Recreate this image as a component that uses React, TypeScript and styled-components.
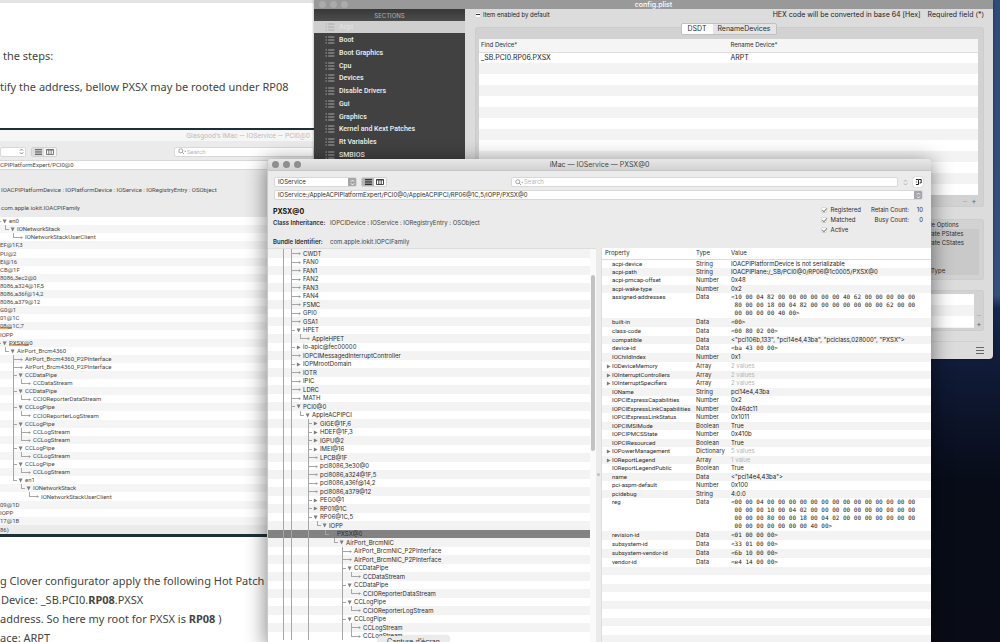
import React from "react";
import styled, { createGlobalStyle, css } from "styled-components";

const GlobalStyle = createGlobalStyle`
  * { box-sizing: border-box; }
  body { margin: 0; font-family: Inter, "Liberation Sans", sans-serif; font-size: 6px; line-height: 8px; color: #2c2c2c; }
  ul, p, h1, h2, dl, dd { margin: 0; padding: 0; }
  ul { list-style: none; }
  button, input, select { font: inherit; color: inherit; margin: 0; padding: 0; border: 0; }
`;

const Desktop = styled.main`
  position: relative;
  height: 100vh;
  overflow: hidden;
  background: linear-gradient(#2f4b78 0, #34507c 46%, #16264c 48%, #101a36 58%, #080c18 75%, #090c16 100%);
`;

/* ---------- forum post ---------- */

const Post = styled.article`
  position: absolute;
  left: 0;
  top: 0;
  bottom: 0;
  width: 314px;
  overflow: hidden;
  display: flex;
  flex-direction: column;
  background: #fff;
  border-top: 3px solid #e4e4e4;
  color: #444;
  font-family: "Noto Sans", "DejaVu Sans", sans-serif;
  font-size: 11px;
  line-height: 19px;
  white-space: nowrap;
`;

const CutLine = styled.p`
  display: flex;
  justify-content: space-between;
  align-items: flex-end;
  height: 3px;
  padding: 0 20px 0 12px;
  overflow: hidden;
  line-height: 8px;
`;

const Steps = styled.div`
  display: flex;
  flex-direction: column;
  gap: 12px;
  padding-top: 43px;
  height: 122px;
  margin-bottom: 3px;
  flex: none;
`;

const Line = styled.p<{ $indent?: number }>`
  padding-left: ${(p) => p.$indent ?? 0}px;
`;

const Patch = styled.div`
  padding-top: 34px;
`;

const Shot = styled.section`
  flex: none;
  display: flex;
  flex-direction: column;
  border: solid #1c3036;
  border-width: 2px 0 3px;
  background: #ebebeb;
  color: #4a4a4a;
  font-family: Roboto, "Liberation Sans", sans-serif;
  font-size: 6px;
  line-height: 8px;
`;

const ShotTitle = styled.h2`
  height: 11px;
  padding-right: 4px;
  background: #f6f6f6;
  color: #bdbdbd;
  font-size: 7px;
  line-height: 12px;
  font-weight: 400;
  text-align: right;
`;

const ShotBar = styled.div`
  display: flex;
  align-items: center;
  height: 19px;
  padding-top: 2px;
`;

const ShotPath = styled.p`
  height: 10px;
  background: #fff;
  border: solid #d8d8d8;
  border-width: 1px 0;
`;

const ShotText = styled.p`
  height: 18px;
  padding-left: 1px;
  line-height: 18px;

  ${ShotPath} + & { margin-top: 11px; }
`;

const ShotFoot = styled.p`
  height: 9px;
  line-height: 9px;
`;

/* ---------- shared controls ---------- */

const Field = styled.label`
  display: flex;
  align-items: center;
  flex: 1;
  height: 10px;
  padding-left: 3px;
  background: #fff;
  border: 1px solid #d8d8d8;
  border-radius: 2px;
  overflow: hidden;

  input {
    flex: 1;
    min-width: 0;
    height: 8px;
    background: none;
    outline: 0;
  }
  input::placeholder { color: #b8b8b8; }
`;

const PickerBox = styled.span<{ $width: number }>`
  display: flex;
  width: ${(p) => p.$width}px;
  height: 10px;
  background: #fff;
  border: 1px solid #d8d8d8;
  border-radius: 2px;
  overflow: hidden;

  select {
    flex: 1;
    min-width: 0;
    height: 8px;
    padding-left: 3px;
    appearance: none;
    background: none;
    outline: 0;
  }
`;

const StepperCap = styled.span<{ $plain?: boolean }>`
  display: grid;
  place-items: center;
  width: 8px;
  height: 8px;
  background: ${(p) => (p.$plain ? "#fff" : "#a6a6aa")};
  color: ${(p) => (p.$plain ? "#777" : "#fff")};
`;

const FaintStepper = styled.span`
  display: grid;
  color: #a8a8a8;
`;

const Segments = styled.div<{ $faded?: boolean }>`
  display: flex;
  height: 10px;
  border: 1px solid #d0d0d0;
  border-radius: 2px;
  background: #fff;
  overflow: hidden;
  color: ${(p) => (p.$faded ? "#6c6c6c" : "#333")};

  button { background: ${(p) => (p.$faded ? "#f6f6f6" : "#fafafa")}; }
  button[aria-pressed="true"] { background: ${(p) => (p.$faded ? "#dedede" : "#b4b4b4")}; }
`;

const Segment = styled.button`
  display: grid;
  place-items: center;
  width: 12px;
`;

const Chevrons = () => (
  <svg width="5" height="7" viewBox="0 0 5 7" fill="none" stroke="currentColor" strokeWidth="0.9">
    <path d="M1 2.6 2.5 1 4 2.6M1 4.4 2.5 6 4 4.4" />
  </svg>
);
const ListIcon = () => (
  <svg width="7" height="6" viewBox="0 0 7 6" stroke="currentColor" strokeWidth="1">
    <path d="M0 .5h7M0 2.2h7M0 3.9h7M0 5.5h7" />
  </svg>
);
const ColumnsIcon = () => (
  <svg width="8" height="6" viewBox="0 0 8 6" fill="none" stroke="currentColor" strokeWidth="0.9">
    <path d="M.5.5h7v5h-7zM2.8.5v5M5.2.5v5M.5 1h7" />
  </svg>
);
const SearchIcon = () => (
  <svg width="9" height="7" viewBox="0 0 9 7" fill="none" stroke="#8a8a8a" strokeWidth="0.8">
    <circle cx="2.8" cy="2.8" r="2" />
    <path d="M4.3 4.3 6 6M6.3 2.8l.9.9.9-.9" />
  </svg>
);
const PaneIcon = () => (
  <svg width="7" height="8" viewBox="0 0 7 8" fill="none" stroke="#222" strokeWidth="1">
    <path d="M1 1.5h2.5v5H1M4 1.5h2.2v3.4H4.6" />
    <path d="M.8 4h1.4" strokeWidth="0.7" />
  </svg>
);

const CheckLabel = styled.label`
  display: flex;
  align-items: center;
  gap: 4px;
`;

const Check = styled.input.attrs({ type: "checkbox" })`
  position: relative;
  appearance: none;
  width: 6px;
  height: 6px;
  background: #fbfbfb;
  border: 1px solid #dadada;
  border-radius: 1px;

  &:checked::after {
    content: "";
    position: absolute;
    left: 1px;
    top: -1px;
    width: 2px;
    height: 4px;
    border: solid #8e8e8e;
    border-width: 0 1px 1px 0;
    transform: rotate(40deg);
  }
  &:indeterminate::after {
    content: "";
    position: absolute;
    inset: 1px 0 auto;
    height: 1px;
    background: #333;
  }
`;

const Lights = styled.span<{ $color: string }>`
  display: flex;
  gap: 4px;

  i {
    width: 7px;
    height: 7px;
    border-radius: 50%;
    background: ${(p) => p.$color};
  }
`;

/* ---------- registry tree ---------- */

type Marker = "-" | "v" | ">" | "";
interface TreeNode {
  /* one character per ancestor level: "|" draws its line, "." leaves it blank */
  guides: string;
  /* T joins a line that goes on, L ends it */
  joint: "T" | "L" | "";
  marker: Marker;
  label: string;
  state?: "selected" | "marked";
}

const parse = (source: string): TreeNode[] =>
  source
    .trim()
    .split("\n")
    .map((line) => {
      const [guides, joint, marker, label, state] = line.trim().split(" ");
      return {
        guides: guides === "0" ? "" : guides,
        joint: (joint === "0" ? "" : joint) as TreeNode["joint"],
        marker: (marker === "0" ? "" : marker) as Marker,
        label,
        state: state as TreeNode["state"],
      };
    });

const ink = "#a6a6a6";

const Guide = styled.i<{ $line: boolean }>`
  flex: none;
  width: 8px;
  align-self: stretch;
  ${(p) =>
    p.$line &&
    css`
      background: linear-gradient(${ink}, ${ink}) 0 0 / 1px 100% no-repeat;
    `}
`;

const Joint = styled.span<{ $last: boolean; $leaf: boolean }>`
  flex: none;
  display: flex;
  justify-content: flex-end;
  align-items: center;
  align-self: stretch;
  width: 12px;
  padding-right: 2px;
  background:
    linear-gradient(${ink}, ${ink}) 0 0 / 1px ${(p) => (p.$last ? "4px" : "100%")} no-repeat,
    linear-gradient(${ink}, ${ink}) 0 4px / ${(p) => (p.$leaf ? 8 : 4)}px 1px no-repeat;
`;

const Label = styled.span<{ $marked?: boolean }>`
  ${(p) =>
    p.$marked &&
    css`
      background: linear-gradient(#f0a460, #f0a460) 0 100% / 100% 2px no-repeat;
    `}
`;

const treeRow = css<{ $selected?: boolean }>`
  display: flex;
  align-items: center;
  overflow: hidden;
  white-space: nowrap;
  ${(p) => p.$selected && "&&& { background: #828282; }"}
`;

const Tree = styled.ul`
  flex: 1;
  min-width: 0;
  background: #fff;
`;

const TreeItem = styled.li<{ $selected?: boolean }>`
  ${treeRow}
  height: 8px;
  padding-left: 15px;
  line-height: 8px;

  &:nth-child(odd) {
    height: 9px;
    background: #f3f3f3;
  }
  ${Guide}:nth-child(even) { width: 9px; }
`;

const ShotTree = styled.ul`
  flex: none;
  background: #fff;
  overflow: hidden;
`;

const ShotItem = styled.li<{ $bare: boolean }>`
  ${treeRow}
  height: 8px;
  margin-left: ${(p) => (p.$bare ? 0 : -3)}px;
  &:nth-child(10n + 5) { height: 9px; }
  &:nth-child(even) { background: #f5f5f5; }
`;

const MarkerIcon = ({ kind }: { kind: Marker }) =>
  kind === "-" ? (
    <svg width="3" height="5" viewBox="0 0 3 5" fill="#989898">
      <path d="M.8 1.3 3 2.6.8 3.9z" />
    </svg>
  ) : (
    <svg width="5" height="5" viewBox="0 0 5 5" fill="#7c7c7c">
      <path d={kind === "v" ? "M.6.6h4L2.6 4.4z" : "M.9.5 4.6 2.5.9 4.5z"} />
    </svg>
  );

const NodeBody = ({ node }: { node: TreeNode }) => {
  const [head, ...rest] = node.label.split("@");
  return (
    <>
      {[...node.guides].map((g, i) => (
        <Guide key={i} $line={g === "|"} />
      ))}
      {node.joint && (
        <Joint $last={node.joint === "L"} $leaf={node.marker === "-"}>
          {node.marker && <MarkerIcon kind={node.marker} />}
        </Joint>
      )}
      {node.state === "marked" ? (
        <span>
          <Label $marked>{head}@</Label>
          {rest.join("@")}
        </span>
      ) : (
        <Label>{node.label}</Label>
      )}
    </>
  );
};

const shotNodes = parse(`
0 T v en0
. L v IONetworkStack
.. L - IONetworkStackUserClient
0 0 0 EF@1F,3
0 0 0 PU@2
0 0 0 EI@16
0 0 0 CB@1F
0 0 0 8086,3ec2@0
0 0 0 8086,a324@1F,5
0 0 0 8086,a36f@14,2
0 0 0 8086,a379@12
0 0 0 G0@1
0 0 0 01@1C
0 0 0 08@1C,7 marked
0 0 0 IOPP
0 L v PXSX@0 marked
. L v AirPort_Brcm4360
.. T - AirPort_Brcm4360_P2PInterface
.. T - AirPort_Brcm4360_P2PInterface
.. T v CCDataPipe
..| L - CCDataStream
.. T v CCDataPipe
..| L - CCIOReporterDataStream
.. T v CCLogPipe
..| L - CCIOReporterLogStream
.. T v CCLogPipe
..| T - CCLogStream
..| L - CCLogStream
.. T v CCLogPipe
..| L - CCLogStream
.. T v CCLogPipe
..| L - CCLogStream
.. L v en1
... L v IONetworkStack
.... L - IONetworkStackUserClient
0 0 0 09@1D
0 0 0 IOPP
0 0 0 17@1B
`);

const treeNodes = parse(`
| T - CWDT
| T - FAN0
| T - FAN1
| T - FAN2
| T - FAN3
| T - FAN4
| T - FSMC
| T - GPI0
| T - GSA1
| T v HPET
|| L - AppleHPET
| T > io-apic@fec00000
| T - IOPCIMessagedInterruptController
| T > IOPMrootDomain
| T - IOTR
| T - IPIC
| T - LDRC
| T - MATH
| T v PCI0@0
|| L v AppleACPIPCI
||. T > GIGE@1F,6
||. T > HDEF@1F,3
||. T > IGPU@2
||. T > IMEI@16
||. T - LPCB@1F
||. T - pci8086,3e30@0
||. T - pci8086,a324@1F,5
||. T - pci8086,a36f@14,2
||. T - pci8086,a379@12
||. T > PEG0@1
||. T > RP01@1C
||. T v RP06@1C,5
||.| L v IOPP
||.|. L 0 PXSX@0 selected
||.|.. L v AirPort_BrcmNIC
||.|... T - AirPort_BrcmNIC_P2PInterface
||.|... T - AirPort_BrcmNIC_P2PInterface
||.|... T v CCDataPipe
||.|...| L - CCDataStream
||.|... T v CCDataPipe
||.|...| L - CCIOReporterDataStream
||.|... T v CCLogPipe
||.|...| L - CCIOReporterLogStream
||.|... T v CCLogPipe
||.|...| T - CCLogStream
||.|...| L - CCLogStream
`);

/* ---------- Clover Configurator ---------- */

const Config = styled.section`
  position: absolute;
  left: 314px;
  right: 7px;
  top: -2px;
  height: 361px;
  display: flex;
  flex-direction: column;
  border-radius: 4px;
  overflow: hidden;
  background: #dcdcdc;
  box-shadow: 0 0 3px rgba(0, 0, 0, 0.4);
`;

const ConfigTitle = styled.header`
  display: grid;
  grid-template-columns: 1fr auto 1fr;
  align-items: center;
  flex: none;
  height: 11px;
  padding: 2px 5px 0;
  background: #999;
  color: #fff;

  h1 { font-size: 7px; line-height: 9px; font-weight: 500; }
`;

const ConfigBody = styled.div`
  flex: 1;
  display: flex;
  min-height: 0;
`;

const Sidebar = styled.nav`
  width: 151px;
  flex: none;
  background: #414141;
  color: #f2f2f2;
`;

const SidebarHead = styled.h2`
  height: 12px;
  background: linear-gradient(#383838, #4c4c4c);
  color: #a4a4a4;
  font-size: 6px;
  line-height: 14px;
  font-weight: 500;
  text-align: center;
`;

const Section = styled.button<{ $current: boolean }>`
  display: flex;
  align-items: center;
  gap: 4px;
  width: 100%;
  height: 13px;
  padding-left: 11px;
  background: ${(p) => (p.$current ? "#cfcfcf" : "none")};
  color: ${(p) => (p.$current ? "#e2e2e2" : "#f2f2f2")};
  font-family: Roboto, "Liberation Sans", sans-serif;
  font-size: 7px;
  font-weight: 500;
  text-align: left;

  &:nth-of-type(4n + 1) { height: 12px; }
`;

const SectionIcon = () => (
  <svg width="10" height="8" viewBox="0 0 10 8" stroke="#a9a9a9" strokeWidth="1">
    <path d="M.5 1h1.4M3.2 1H9.4M.5 4h1.4M3.2 4H9.4M.5 7h1.4M3.2 7H9.4" />
  </svg>
);

const Pane = styled.div`
  flex: 1;
  min-width: 0;
  display: flex;
  flex-direction: column;
  padding: 0 9px 0 10px;
`;

const PaneTop = styled.div`
  display: flex;
  align-items: center;
  gap: 7px;
  height: 12px;
  color: #222;

  & > :first-child { margin-right: auto; gap: 2px; }
`;

const Note = styled.span`
  font-size: 7px;
`;

const Box = styled.section`
  background: #d2d2d2;
  border: 1px solid #cdcdcd;
  border-radius: 2px;
`;

const TabBox = styled(Box)`
  margin-top: 6px;
  height: 180px;
  padding: 0 5px 0 3px;
`;

const Tabs = styled.div`
  display: flex;
  width: 96px;
  height: 12px;
  margin: -5px auto 4px;
  border: 1px solid #c0c0c0;
  border-radius: 2px;
  background: #e4e4e4;
  overflow: hidden;
`;

const Tab = styled.button<{ $on?: boolean }>`
  flex: ${(p) => (p.$on ? "0 0 31px" : 1)};
  background: ${(p) => (p.$on ? "#fff" : "none")};
  font-size: 7px;
  line-height: 10px;
`;

const Devices = styled.table`
  width: 100%;
  border-collapse: collapse;
  table-layout: fixed;
  background: #fff;

  th { height: 13px; padding: 0 2px; background: #f5f5f5; border-bottom: 1px solid #dedede; font-weight: 400; text-align: left; }
  td { height: 11px; padding: 0 2px; color: #222; font-size: 7px; }
  tbody tr:nth-child(even) { background: #f3f3f3; }
`;

const PlusMinus = styled.div<{ $stack?: boolean }>`
  display: flex;
  flex-direction: ${(p) => (p.$stack ? "column" : "row")};
  justify-content: flex-end;
  align-items: ${(p) => (p.$stack ? "center" : "stretch")};
  gap: 1px;
  padding-top: 2px;

  button { width: 8px; height: 8px; background: none; color: #666; font-size: 8px; line-height: 8px; }
  button:first-child { color: #aaa; }
`;

const Lower = styled.div`
  display: flex;
  flex-direction: column;
  gap: 10px;
  margin-top: 12px;
`;

const Options = styled(Box)`
  height: 61px;
  display: flex;
  flex-direction: column;
  align-self: flex-end;
  width: 120px;
  padding: 1px 4px 4px;
`;

const OptionsTitle = styled.h2`
  padding-left: 40px;
  font-size: 6px;
  line-height: 8px;
  font-weight: 400;
`;

const OptionsInner = styled.div`
  flex: 1;
  display: flex;
  flex-direction: column;
  gap: 1px;
  padding: 1px 0 0 35px;
  background: #c9c9c9;

  p { margin-top: auto; padding-left: 10px; }
`;

const Extra = styled(Box)`
  display: flex;
  gap: 1px;
  height: 41px;
  padding: 3px 0 2px 3px;
`;

const Blank = styled.div`
  flex: 1;
  background: repeating-linear-gradient(#fff 0 11px, #f3f3f3 11px 22px);
`;

const ConfigFoot = styled.footer`
  display: flex;
  justify-content: flex-end;
  align-items: center;
  flex: 1;
  margin-top: 10px;
  border-top: 1px solid #d0d0d0;

  button { display: grid; background: none; }
`;

/* ---------- IORegistryExplorer ---------- */

const Explorer = styled.section`
  position: absolute;
  left: 267px;
  right: 69px;
  top: 159px;
  bottom: 0;
  display: flex;
  flex-direction: column;
  border-left: 1px solid #c8c8c8;
  border-radius: 4px 4px 0 0;
  overflow: hidden;
  background: #ebebeb;
  box-shadow: 0 4px 20px 2px rgba(0, 0, 0, 0.45);
`;

const ExplorerTitle = styled.header`
  display: grid;
  grid-template-columns: 1fr auto 1fr;
  align-items: center;
  flex: none;
  height: 12px;
  padding: 0 4px;
  background: linear-gradient(#e8e8e8, #d2d2d2);
  border-bottom: 1px solid #c6c6c6;

  h1 { font-size: 7px; line-height: 11px; font-weight: 400; color: #444; }
`;

const Toolbar = styled.div`
  display: flex;
  align-items: center;
  flex: none;
  padding: 6px 8px 0 6px;
`;

const Gap = styled.span<{ $w: number }>`
  flex: none;
  width: ${(p) => p.$w}px;
`;

const Spring = styled.span`
  flex: 1;
  max-width: 124px;
`;

const PathRow = styled.div`
  display: flex;
  padding: 3px 8px 0 6px;
`;

const PaneButton = styled.button`
  display: grid;
  place-items: center;
  width: 10px;
  height: 10px;
  border-radius: 2px;
  background: #fff;
  box-shadow: 0 0 1px #888;
`;

const Info = styled.div`
  display: flex;
  flex: none;
  justify-content: space-between;
  height: 48px;
  padding: 6px 8px 0 5px;
`;

const Facts = styled.dl`
  display: grid;
  grid-template-columns: 57px auto;
  grid-template-rows: 12px 19px 9px;
  align-content: start;

  h2 { grid-column: span 2; font-size: 7px; line-height: 12px; font-weight: 700; color: #111; }
  dt { font-weight: 600; }
  dt, dd { line-height: 9px; }
  dd { color: #444; }
`;

const Status = styled.div`
  display: flex;
  gap: 10px;
`;

const Column = styled.div`
  display: flex;
  flex-direction: column;
  gap: 2px;
`;

const Counts = styled.dl`
  display: grid;
  grid-template-columns: auto 14px;
  align-content: start;
  row-gap: 2px;
  text-align: right;
`;

const Split = styled.div`
  flex: 1;
  display: grid;
  grid-template-columns: 328px 6px minmax(0, 1fr);
  min-height: 0;
  overflow: hidden;
`;

const TreePane = styled.div`
  display: flex;
  border-top: 1px solid #ddd;
  min-height: 0;
`;

const Track = styled.div`
  width: 6px;
  padding: 26px 1px 0;
  background: #fafafa;

  i { display: block; width: 4px; height: 176px; border-radius: 2px; background: #c2c2c2; }
`;

const Divider = styled.div`
  display: grid;
  place-items: start center;
  padding-top: 225px;
  background: #ebebeb;
  border-right: 1px solid #ddd;

  i { width: 3px; height: 3px; border-radius: 50%; background: #c0c0c0; }
`;

const Props = styled.table`
  width: 100%;
  border-collapse: collapse;
  table-layout: fixed;
  align-self: start;
  background: #fff;

  th, td { padding: 0; text-align: left; vertical-align: top; white-space: nowrap; line-height: 8px; font-weight: 400; }
  thead th { height: 11px; padding-top: 1px; border-bottom: 1px solid #ddd; }
  thead th:first-child { padding-left: 3px; }
`;

const PropRow = styled.tr`
  height: 9px;
  &:nth-child(even) { height: 8px; background: #f3f3f3; }
  &:nth-child(6), &:nth-child(10), &:nth-child(28), &:nth-child(30) { height: 9px; }
`;

const PropName = styled.th`
  && { padding-left: 10px; }
  position: relative;
  font-family: Roboto, "Liberation Sans", sans-serif;

  svg { position: absolute; left: 4px; top: 2px; }
`;

const Value = styled.td<{ $mono?: boolean; $dim?: boolean }>`
  color: ${(p) => (p.$dim ? "#b4b4b4" : "#222")};
  ${(p) =>
    p.$mono &&
    css`
      && { white-space: pre; padding-bottom: 1px; }
      font-family: "DejaVu Sans Mono", "Liberation Mono", monospace;
    `}
`;

const Tip = styled.div`
  position: absolute;
  left: 378px;
  bottom: 0;
  width: 71px;
  height: 6px;
  overflow: hidden;
  border-radius: 2px 2px 0 0;
  background: #ebebeb;
  box-shadow: 0 0 2px rgba(0, 0, 0, 0.3);
  font-size: 7px;
  line-height: 12px;
  text-align: center;
`;

const properties: [string, string, string][] = [
  ["acpi-device", "String", "IOACPIPlatformDevice is not serializable"],
  ["acpi-path", "String", "IOACPIPlane:/_SB/PCI0@0/RP06@1c0005/PXSX@0"],
  ["acpi-pmcap-offset", "Number", "0x48"],
  ["acpi-wake-type", "Number", "0x2"],
  ["assigned-addresses", "Data", "<10 00 04 82 00 00 00 00 00 00 40 62 00 00 00 00 00\n 80 00 00 18 00 04 82 00 00 00 00 00 00 00 62 00 00\n 00 00 00 00 40 00>"],
  ["built-in", "Data", "<00>"],
  ["class-code", "Data", "<00 80 02 00>"],
  ["compatible", "Data", '<"pci106b,133", "pci14e4,43ba", "pciclass,028000", "PXSX">'],
  ["device-id", "Data", "<ba 43 00 00>"],
  ["IOChildIndex", "Number", "0x1"],
  ["IODeviceMemory", "Array", "2 values"],
  ["IOInterruptControllers", "Array", "2 values"],
  ["IOInterruptSpecifiers", "Array", "2 values"],
  ["IOName", "String", "pci14e4,43ba"],
  ["IOPCIExpressCapabilities", "Number", "0x2"],
  ["IOPCIExpressLinkCapabilities", "Number", "0x46dc11"],
  ["IOPCIExpressLinkStatus", "Number", "0x1011"],
  ["IOPCIMSIMode", "Boolean", "True"],
  ["IOPCIPMCSState", "Number", "0x410b"],
  ["IOPCIResourced", "Boolean", "True"],
  ["IOPowerManagement", "Dictionary", "5 values"],
  ["IOReportLegend", "Array", "1 value"],
  ["IOReportLegendPublic", "Boolean", "True"],
  ["name", "Data", '<"pci14e4,43ba">'],
  ["pci-aspm-default", "Number", "0x100"],
  ["pcidebug", "String", "4:0:0"],
  ["reg", "Data", "<00 00 04 00 00 00 00 00 00 00 00 00 00 00 00 00 00\n 00 00 00 10 00 04 02 00 00 00 00 00 00 00 00 00 00\n 00 00 00 80 00 00 18 00 04 02 00 00 00 00 00 00 00\n 00 00 00 00 00 00 00 40 00>"],
  ["revision-id", "Data", "<01 00 00 00>"],
  ["subsystem-id", "Data", "<33 01 00 00>"],
  ["subsystem-vendor-id", "Data", "<6b 10 00 00>"],
  ["vendor-id", "Data", "<e4 14 00 00>"],
  ...Array.from({ length: 10 }, (): [string, string, string] => ["", "", ""]),
];

const sections = ["Acpi", "Boot", "Boot Graphics", "Cpu", "Devices", "Disable Drivers", "Gui", "Graphics", "Kernel and Kext Patches", "Rt Variables", "SMBIOS"];

const Dots = ({ color }: { color: string }) => (
  <Lights $color={color}>
    <i />
    <i />
    <i />
  </Lights>
);

const ViewSwitch = ({ faded }: { faded?: boolean }) => (
  <Segments $faded={faded}>
    <Segment aria-pressed="true" aria-label="Outline view">
      <ListIcon />
    </Segment>
    <Segment aria-pressed="false" aria-label="Column view">
      <ColumnsIcon />
    </Segment>
  </Segments>
);

const PostView = () => (
  <Post>
    <CutLine>
      <span>,</span>
      <span>g</span>
    </CutLine>
    <Steps>
      <Line $indent={3}>the steps:</Line>
      <Line>tify the address, bellow PXSX may be rooted under RP08</Line>
    </Steps>
    <Shot>
      <ShotTitle>Glasgood's iMac — IOService — PCI0@0</ShotTitle>
      <ShotBar>
        <PickerBox $width={26}>
          <select aria-label="Plane" />
          <StepperCap $plain>
            <Chevrons />
          </StepperCap>
        </PickerBox>
        <Gap $w={5} />
        <ViewSwitch faded />
        <Gap $w={117} />
        <Field>
          <SearchIcon />
          <input aria-label="Search entries" placeholder="Search" />
        </Field>
      </ShotBar>
      <ShotPath>CPIPlatformExpert/PCI0@0</ShotPath>
      <ShotText>IOACPIPlatformDevice : IOPlatformDevice : IOService : IORegistryEntry : OSObject</ShotText>
      <ShotText>com.apple.iokit.IOACPIFamily</ShotText>
      <ShotTree>
        {shotNodes.map((n, i) => (
          <ShotItem key={i} $bare={!n.joint}>
            <NodeBody node={n} />
          </ShotItem>
        ))}
      </ShotTree>
      <ShotFoot>86)</ShotFoot>
    </Shot>
    <Patch>
      <Line>g Clover configurator apply the following Hot Patch</Line>
      <Line $indent={1}>
        Device: _SB.PCI0.<b>RP08</b>.PXSX
      </Line>
      <Line>
        address. So here my root for PXSX is <b>RP08</b> )
      </Line>
      <Line>ace: ARPT</Line>
    </Patch>
  </Post>
);

const ConfigView = () => (
  <Config>
    <ConfigTitle>
      <Dots color="#ababab" />
      <h1>config.plist</h1>
    </ConfigTitle>
    <ConfigBody>
      <Sidebar>
        <SidebarHead>SECTIONS</SidebarHead>
        {sections.map((s, i) => (
          <Section key={s} $current={i === 0}>
            <SectionIcon />
            {s}
          </Section>
        ))}
      </Sidebar>
      <Pane>
        <PaneTop>
          <CheckLabel>
            <Check
              ref={(el) => {
                if (el) el.indeterminate = true;
              }}
            />
            Item enabled by default
          </CheckLabel>
          <Note>HEX code will be converted in base 64 [Hex]</Note>
          <Note>Required field (*)</Note>
        </PaneTop>
        <TabBox>
          <Tabs>
            <Tab $on>DSDT</Tab>
            <Tab>RenameDevices</Tab>
          </Tabs>
          <Devices>
            <thead>
              <tr>
                <th>Find Device*</th>
                <th>Rename Device*</th>
              </tr>
            </thead>
            <tbody>
              <tr>
                <td>_SB.PCI0.RP06.PXSX</td>
                <td>ARPT</td>
              </tr>
              {Array.from({ length: 12 }, (_, i) => (
                <tr key={i}>
                  <td />
                  <td />
                </tr>
              ))}
            </tbody>
          </Devices>
          <PlusMinus>
            <button aria-label="Remove device">−</button>
            <button aria-label="Add device">+</button>
          </PlusMinus>
        </TabBox>
        <Lower>
          <Options>
            <OptionsTitle>Generate Options</OptionsTitle>
            <OptionsInner>
              <CheckLabel>
                <Check />
                Generate PStates
              </CheckLabel>
              <CheckLabel>
                <Check />
                Generate CStates
              </CheckLabel>
              <p>PluginType</p>
            </OptionsInner>
          </Options>
          <Extra>
            <Blank />
            <PlusMinus $stack>
              <button aria-label="Remove entry">−</button>
              <button aria-label="Add entry">+</button>
            </PlusMinus>
          </Extra>
        </Lower>
        <ConfigFoot>
          <button aria-label="Menu">
            <svg width="8" height="7" viewBox="0 0 8 7" stroke="#666">
              <path d="M0 .5h8M0 3.5h8M0 6.5h8" />
            </svg>
          </button>
        </ConfigFoot>
      </Pane>
    </ConfigBody>
  </Config>
);

const ExplorerView = () => (
  <Explorer>
    <ExplorerTitle>
      <Dots color="#8e8e90" />
      <h1>iMac — IOService — PXSX@0</h1>
    </ExplorerTitle>
    <Toolbar>
      <PickerBox $width={83}>
        <select aria-label="Registry plane">
          <option>IOService</option>
        </select>
        <StepperCap>
          <Chevrons />
        </StepperCap>
      </PickerBox>
      <Gap $w={4} />
      <ViewSwitch />
      <Spring />
      <Field>
        <SearchIcon />
        <input aria-label="Search" placeholder="Search" />
      </Field>
      <Gap $w={5} />
      <FaintStepper>
        <Chevrons />
      </FaintStepper>
      <Gap $w={5} />
      <PaneButton aria-label="Toggle inspector">
        <PaneIcon />
      </PaneButton>
    </Toolbar>
    <PathRow>
      <Field>
        <input aria-label="Path" readOnly value="IOService:/AppleACPIPlatformExpert/PCI0@0/AppleACPIPCI/RP06@1C,5/IOPP/PXSX@0" />
        <StepperCap>
          <Chevrons />
        </StepperCap>
      </Field>
    </PathRow>
    <Info>
      <Facts>
        <h2>PXSX@0</h2>
        <dt>Class Inheritance:</dt>
        <dd>IOPCIDevice : IOService : IORegistryEntry : OSObject</dd>
        <dt>Bundle Identifier:</dt>
        <dd>com.apple.iokit.IOPCIFamily</dd>
      </Facts>
      <Status>
        <Column>
          {["Registered", "Matched", "Active"].map((s) => (
            <CheckLabel key={s}>
              <Check defaultChecked />
              {s}
            </CheckLabel>
          ))}
        </Column>
        <Counts>
          <dt>Retain Count:</dt>
          <dd>10</dd>
          <dt>Busy Count:</dt>
          <dd>0</dd>
        </Counts>
      </Status>
    </Info>
    <Split>
      <TreePane>
        <Tree>
          {treeNodes.map((n, i) => (
            <TreeItem key={i} $selected={n.state === "selected"}>
              <NodeBody node={n} />
            </TreeItem>
          ))}
        </Tree>
        <Track>
          <i />
        </Track>
      </TreePane>
      <Divider>
        <i />
      </Divider>
      <Props>
        <colgroup>
          <col style={{ width: 94 }} />
          <col style={{ width: 35 }} />
          <col />
        </colgroup>
        <thead>
          <tr>
            <th>Property</th>
            <th>Type</th>
            <th>Value</th>
          </tr>
        </thead>
        <tbody>
          {properties.map(([name, type, value], i) => (
            <PropRow key={i}>
              <PropName scope="row">
                {/ values?$/.test(value) && <MarkerIcon kind=">" />}
                {name}
              </PropName>
              <td>{type}</td>
              <Value $mono={/^<[^"]/.test(value)} $dim={/ values?$/.test(value)}>
                {value}
              </Value>
            </PropRow>
          ))}
        </tbody>
      </Props>
    </Split>
  </Explorer>
);

export default function App() {
  return (
    <>
      <GlobalStyle />
      <Desktop>
        <PostView />
        <ConfigView />
        <ExplorerView />
        <Tip>Capture d’écran</Tip>
      </Desktop>
    </>
  );
}
